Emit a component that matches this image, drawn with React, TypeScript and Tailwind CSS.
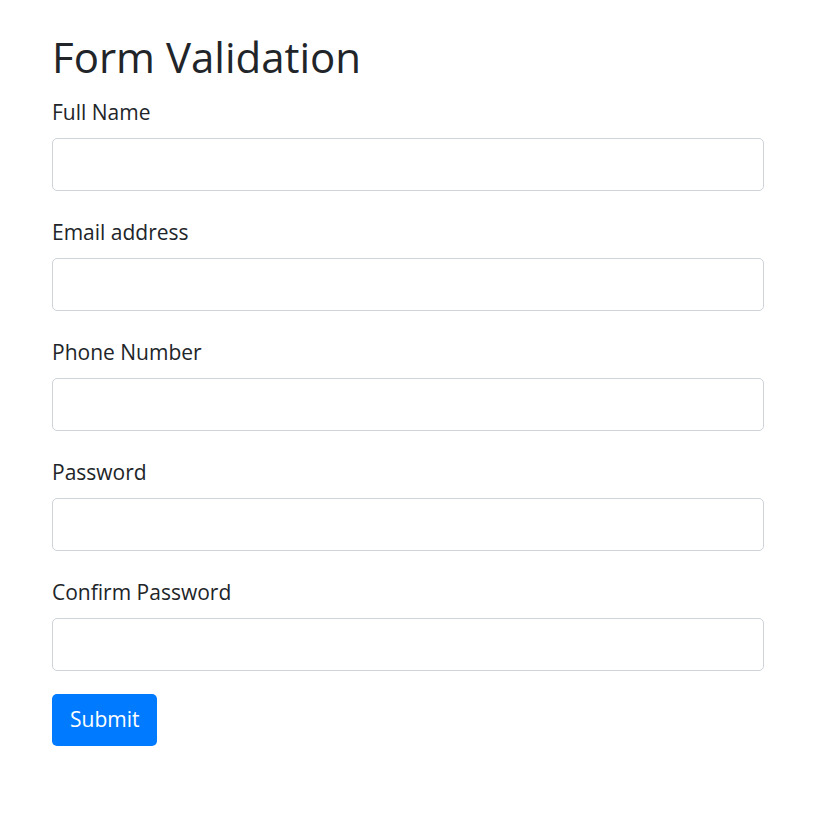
import React from 'react';

const fields = ['Full Name', 'Email address', 'Phone Number', 'Password', 'Confirm Password'];

const App: React.FC = () => {
  return (
    <div
      className="min-h-screen bg-white px-[52px] pt-[26px] text-[#212529]"
      style={{ fontFamily: '"Open Sans", "Noto Sans", sans-serif' }}
    >
      <div className="w-[712px]">
        <h1 className="mb-[7px] text-[42px] leading-[62px] font-normal">Form Validation</h1>
        <form onSubmit={e => e.preventDefault()}>
          {fields.map(label => (
            <div key={label} className="mb-[24px]">
              <label className="mb-[9px] block text-[21px] leading-[34px]">{label}</label>
              <input
                type={label.includes('Password') ? 'password' : 'text'}
                className="block h-[53px] w-full rounded-[5px] border border-[#ced4da] bg-white px-4 text-[20px] outline-none"
              />
            </div>
          ))}
          <button
            type="submit"
            className="-mt-[1px] h-[52px] rounded-[5px] bg-[#007bff] px-[18px] text-[21px] text-white"
          >
            Submit
          </button>
        </form>
      </div>
    </div>
  );
};

export default App;
